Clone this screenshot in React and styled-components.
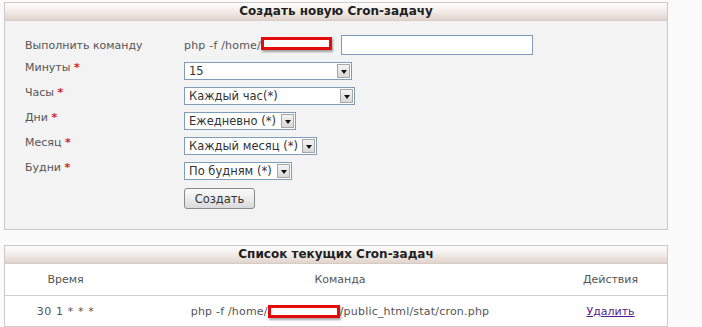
import React from "react";
import styled, { createGlobalStyle } from "styled-components";

const Global = createGlobalStyle`
  html, body { margin: 0; padding: 0; background: #fbfbfb; }
  body { font-family: "DejaVu Sans", Verdana, sans-serif; font-size: 11px; color: #555; }
`;

const Page = styled.div`
  width: 664px;
  padding: 2px 0 0 4px;
  display: flex;
  flex-direction: column;
  gap: 15px;
`;

const Panel = styled.div`
  border: 1px solid #c9c9c9;
  background: ${(p) => p.$bg || "#f3f3f3"};
`;

const PanelHeader = styled.div`
  height: 17px;
  line-height: 17px;
  text-align: center;
  font-weight: bold;
  font-size: 12px;
  color: #1e1e1e;
  background: linear-gradient(to bottom, #fdfcfc 0%, #f3eeeb 45%, #e1d4cc 100%);
  border-bottom: 1px solid #d6ccc6;
`;

const FormBody = styled.div`
  padding: 14px 20px 20px 20px;
  display: grid;
  grid-template-columns: 159px 1fr;
  row-gap: 7px;
  align-items: center;
`;

const Label = styled.div`
  color: #555;
  align-self: ${(p) => (p.$top ? "start" : "center")};
  margin-top: ${(p) => (p.$top ? "-1px" : "0")};
`;

const Req = styled.span`
  color: #d21f1f;
  font-weight: bold;
`;

const CommandLine = styled.div`
  display: flex;
  align-items: center;
  height: 20px;
  color: #555;
  letter-spacing: 0.2px;
`;

const Redact = styled.span`
  display: inline-block;
  width: ${(p) => p.$w}px;
  height: 7px;
  border: 3px solid #e30b0b;
  background: #fff;
  box-shadow: 1px 2px 2px rgba(0, 0, 0, 0.35);
  margin-top: ${(p) => p.$mt || 0}px;
`;

const TextInput = styled.div`
  width: 190px;
  height: 18px;
  border: 1px solid #7f9db9;
  background: #fff;
  margin-left: 9px;
`;

const SelectBox = styled.div`
  height: 16px;
  border: 1px solid #7f9db9;
  background: #fff;
  display: flex;
  align-items: center;
  justify-content: space-between;
  padding-left: 4px;
  box-sizing: content-box;
  width: ${(p) => p.$w - 6}px;
  color: #333;
`;

const SelectText = styled.span`
  font-size: 11.5px;
  line-height: 16px;
`;

const Arrow = styled.span`
  width: 13px;
  height: 14px;
  margin-right: 1px;
  border: 1px solid #a7a7a7;
  box-sizing: border-box;
  background: linear-gradient(to bottom, #f4f4f4, #d8d8d8);
  display: flex;
  align-items: center;
  justify-content: center;
  &::after {
    content: "";
    border-left: 3px solid transparent;
    border-right: 3px solid transparent;
    border-top: 4px solid #111;
    margin-top: 1px;
  }
`;

const Button = styled.div`
  width: 69px;
  height: 19px;
  margin-top: 1px;
  border: 1px solid #8a8a8a;
  border-radius: 3px;
  background: linear-gradient(to bottom, #fbfbfb 0%, #ececec 50%, #d9d9d9 100%);
  display: flex;
  align-items: center;
  justify-content: center;
  color: #333;
  font-size: 11.5px;
`;

const Row = styled.div`
  display: grid;
  grid-template-columns: 121px 1fr 113px;
  align-items: center;
  height: ${(p) => p.$h}px;
  background: #fff;
  border-bottom: ${(p) => (p.$line ? "1px solid #d2d2d2" : "none")};
`;

const Cell = styled.div`
  text-align: center;
  color: #555;
  display: flex;
  justify-content: center;
  align-items: center;
  letter-spacing: ${(p) => p.$ls || 0}px;
`;

const Link = styled.a`
  color: #551a8b;
  text-decoration: underline;
  cursor: pointer;
`;

function Select({ w, children }) {
  return (
    <SelectBox $w={w}>
      <SelectText>{children}</SelectText>
      <Arrow />
    </SelectBox>
  );
}

export default function App() {
  return (
    <>
      <Global />
      <Page>
        <Panel>
          <PanelHeader>Создать новую Cron-задачу</PanelHeader>
          <FormBody>
            <Label>Выполнить команду</Label>
            <CommandLine>
              php -f /home/
              <Redact $w={65} $mt={-4} />
              <TextInput />
            </CommandLine>

            <Label $top>
              Минуты <Req>*</Req>
            </Label>
            <Select w={168}>15</Select>

            <Label $top>
              Часы <Req>*</Req>
            </Label>
            <Select w={171}>Каждый час(*)</Select>

            <Label $top>
              Дни <Req>*</Req>
            </Label>
            <Select w={112}>Ежедневно (*)</Select>

            <Label $top>
              Месяц <Req>*</Req>
            </Label>
            <Select w={133}>Каждый месяц (*)</Select>

            <Label $top>
              Будни <Req>*</Req>
            </Label>
            <Select w={108}>По будням (*)</Select>

            <div />
            <Button>Создать</Button>
          </FormBody>
        </Panel>

        <Panel $bg="#fff">
          <PanelHeader>Список текущих Cron-задач</PanelHeader>
          <Row $h={31} $line>
            <Cell>Время</Cell>
            <Cell>Команда</Cell>
            <Cell>Действия</Cell>
          </Row>
          <Row $h={30}>
            <Cell $ls={0.6}>30 1 * * *</Cell>
            <Cell $ls={0.2}>
              php -f /home/
              <Redact $w={66} />
              /public_html/stat/cron.php
            </Cell>
            <Cell>
              <Link>Удалить</Link>
            </Cell>
          </Row>
        </Panel>
      </Page>
    </>
  );
}
